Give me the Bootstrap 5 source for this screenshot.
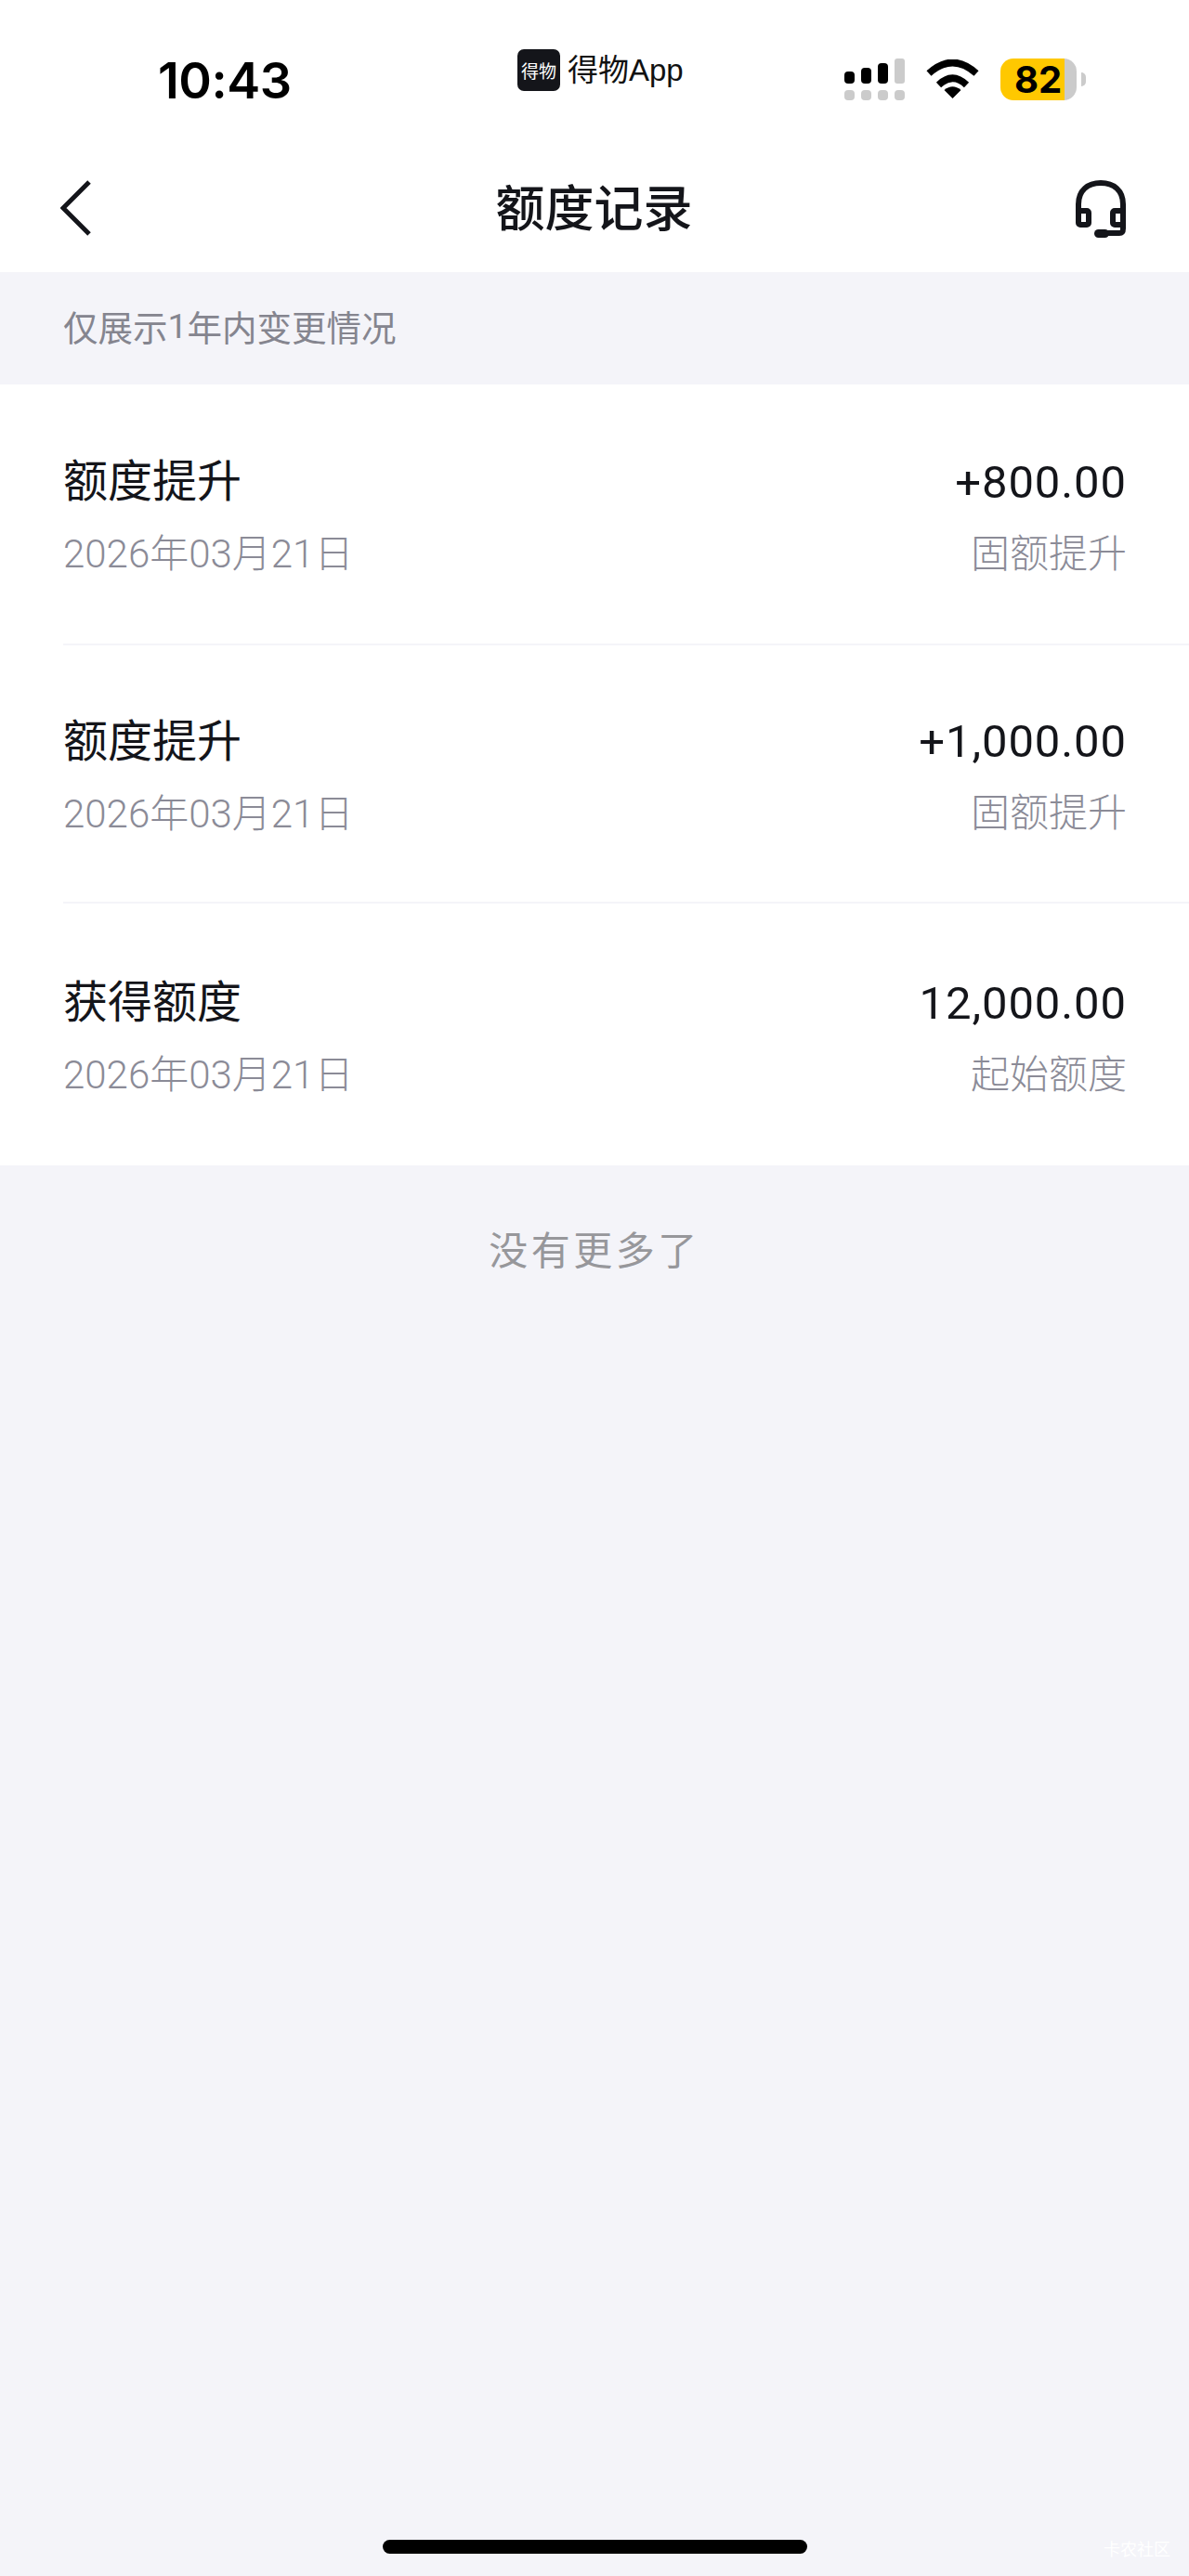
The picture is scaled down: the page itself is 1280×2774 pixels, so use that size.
<!DOCTYPE html>
<html lang="zh-CN">
<head>
  <meta charset="UTF-8" />
  <title>额度记录</title>
  <link href="https://cdn.jsdelivr.net/npm/bootstrap@5.3.0/dist/css/bootstrap.min.css" rel="stylesheet" />
  <style>
    body {
      background: #f4f4f9;
      color: #14151a;
      font-family: "Roboto", "Noto Sans CJK SC", sans-serif;
      min-height: 2774px;
      position: relative;
    }
    /* status bar */
    .status-strip { height: 150px; padding: 53px 0 0 170px; align-items: flex-start; }
    .status-time { width: 387px; font-family: "Inter", sans-serif; font-size: 54px; font-weight: 600; line-height: 68px; color: #000; letter-spacing: -0.5px; }
    .app-logo { width: 46px; height: 45px; border-radius: 7px; background: #14151a; color: #fff; font-family: "Noto Sans CJK SC", sans-serif; font-size: 19px; line-height: 45px; text-align: center; }
    .app-name { width: 306px; padding-left: 8px; font-family: "Liberation Sans", "Noto Sans CJK SC", sans-serif; font-size: 33px; line-height: 46px; color: #111; }
    .signal-icon { margin-top: 10px; }
    .wifi-icon { margin: 11px 0 0 23px; }
    .battery-box { width: 82px; height: 45px; margin: 10px 0 0 23px; border-radius: 14px; background: linear-gradient(90deg, #ffc800 0, #ffc800 69px, #cbcbcb 69px); font-family: "Inter", sans-serif; font-size: 40px; font-weight: 700; line-height: 45px; color: #000; padding-left: 15px; white-space: nowrap; }
    .battery-nub { width: 5px; height: 15px; margin: 25px 0 0 5px; border-radius: 0 5px 5px 0; background: #cbcbcb; }
    /* nav */
    .nav-strip { height: 143px; padding: 0 67px 0 65px; }
    .nav-side { width: 100px; }
    .nav-heading { font-family: "Noto Sans CJK SC", sans-serif; font-size: 53px; font-weight: 500; line-height: 1; margin: 0 0 0 1px; }
    .nav-back { margin-top: 5px; }
    .nav-help { margin-top: 6px; }
    /* notice band */
    .notice-band { height: 121px; padding: 0 0 5px 68px; font-family: "Noto Sans CJK SC", sans-serif; font-size: 37.5px; color: #85858f; }
    .notice-band .num { font-family: "Roboto", sans-serif; }
    /* records */
    .record-list { padding-left: 68px; }
    .record-row { height: 278.5px; padding: 0 67px 0 0; }
    .record-row + .record-row { border-top: 2px solid #f4f4f9; }
    .record-row:last-child { height: 284px; }
    .record-name { font-family: "Noto Sans CJK SC", sans-serif; font-size: 48px; line-height: 70px; margin-top: -2px; }
    .record-amount { font-size: 49px; line-height: 70px; letter-spacing: 0.9px; margin-top: 3px; }
    .record-date, .record-kind { font-size: 42px; line-height: 56px; color: #8b8b97; font-weight: 300; margin-top: 20px; }
    .record-kind { margin-top: 14px; }
    .end-note { padding-top: 61px; font-family: "Noto Sans CJK SC", sans-serif; font-size: 42px; line-height: 56px; letter-spacing: 3.5px; color: #97979b; text-align: center; }
    /* bottom overlays */
    .home-bar { position: absolute; left: 412px; top: 2735px; width: 457px; height: 15px; border-radius: 8px; background: #000; }
    .water-mark { position: absolute; left: 1188px; top: 2731px; font-family: "Noto Sans CJK SC", sans-serif; font-size: 18px; line-height: 26px; color: #fff; }
  </style>
</head>
<body>

  <!-- Status bar -->
  <div class="bg-white">
    <div class="d-flex status-strip">
      <div class="status-time">10:43</div>
      <div class="app-logo">得物</div>
      <div class="app-name">得物App</div>
      <svg class="signal-icon" width="65" height="45" viewBox="0 0 65 45">
        <rect x="0" y="14" width="11" height="13" rx="4" fill="#000"/>
        <rect x="18" y="10" width="11" height="17" rx="4" fill="#000"/>
        <rect x="36" y="5" width="11" height="22" rx="4" fill="#000"/>
        <rect x="54" y="0" width="11" height="27" rx="3" fill="#cbcbcb"/>
        <rect x="0" y="34" width="11" height="11" rx="4" fill="#cbcbcb"/>
        <rect x="18" y="34" width="11" height="11" rx="4" fill="#cbcbcb"/>
        <rect x="36" y="34" width="11" height="11" rx="4" fill="#cbcbcb"/>
        <rect x="54" y="34" width="11" height="11" rx="4" fill="#cbcbcb"/>
      </svg>
      <svg class="wifi-icon" width="57" height="42" viewBox="0 0 57 42">
        <path d="M3 15 Q28.500 -8 54 15" fill="none" stroke="#000" stroke-width="7.500"/>
        <path d="M13.500 27.500 Q28.500 13 43.500 27.500" fill="none" stroke="#000" stroke-width="7.500"/>
        <path d="M28.500 42 L19.500 33 Q28.500 25.500 37.500 33 Z" fill="#000"/>
      </svg>
      <div class="battery-box">82</div>
      <div class="battery-nub"></div>
    </div>

    <!-- Page header -->
    <div class="d-flex align-items-center justify-content-between nav-strip">
      <div class="nav-side">
        <svg class="nav-back d-block" width="34" height="60" viewBox="0 0 34 60">
          <path d="M31 2 L3 30 L31 58" fill="none" stroke="#14151a" stroke-width="5"/>
        </svg>
      </div>
      <h1 class="nav-heading">额度记录</h1>
      <div class="nav-side d-flex justify-content-end">
        <svg class="nav-help d-block" width="56" height="62" viewBox="0 0 56 62">
          <path d="M4 36 V26 C4 11 14 3 28 3 C42 3 52 11 52 26 V52 C52 55 51 57 48 57 H30" fill="none" stroke="#14151a" stroke-width="6"/>
          <rect x="4" y="33" width="11" height="15" rx="2" fill="none" stroke="#14151a" stroke-width="6"/>
          <rect x="41" y="33" width="11" height="15" rx="2" fill="none" stroke="#14151a" stroke-width="6"/>
          <rect x="21" y="53" width="16" height="9" rx="4.500" fill="#14151a"/>
        </svg>
      </div>
    </div>
  </div>

  <!-- Notice -->
  <div class="d-flex align-items-center notice-band">仅展示<span class="num">1</span>年内变更情况</div>

  <!-- Records -->
  <div class="bg-white record-list">
    <div class="d-flex justify-content-between align-items-center record-row">
      <div>
        <div class="record-name">额度提升</div>
        <div class="record-date">2026年03月21日</div>
      </div>
      <div class="text-end">
        <div class="record-amount">+800.00</div>
        <div class="record-kind">固额提升</div>
      </div>
    </div>
    <div class="d-flex justify-content-between align-items-center record-row">
      <div>
        <div class="record-name">额度提升</div>
        <div class="record-date">2026年03月21日</div>
      </div>
      <div class="text-end">
        <div class="record-amount">+1,000.00</div>
        <div class="record-kind">固额提升</div>
      </div>
    </div>
    <div class="d-flex justify-content-between align-items-center record-row">
      <div>
        <div class="record-name">获得额度</div>
        <div class="record-date">2026年03月21日</div>
      </div>
      <div class="text-end">
        <div class="record-amount">12,000.00</div>
        <div class="record-kind">起始额度</div>
      </div>
    </div>
  </div>

  <div class="end-note">没有更多了</div>

  <div class="home-bar"></div>
  <div class="water-mark">卡农社区</div>

  <script src="https://cdn.jsdelivr.net/npm/bootstrap@5.3.0/dist/js/bootstrap.bundle.min.js"></script>
</body>
</html>
